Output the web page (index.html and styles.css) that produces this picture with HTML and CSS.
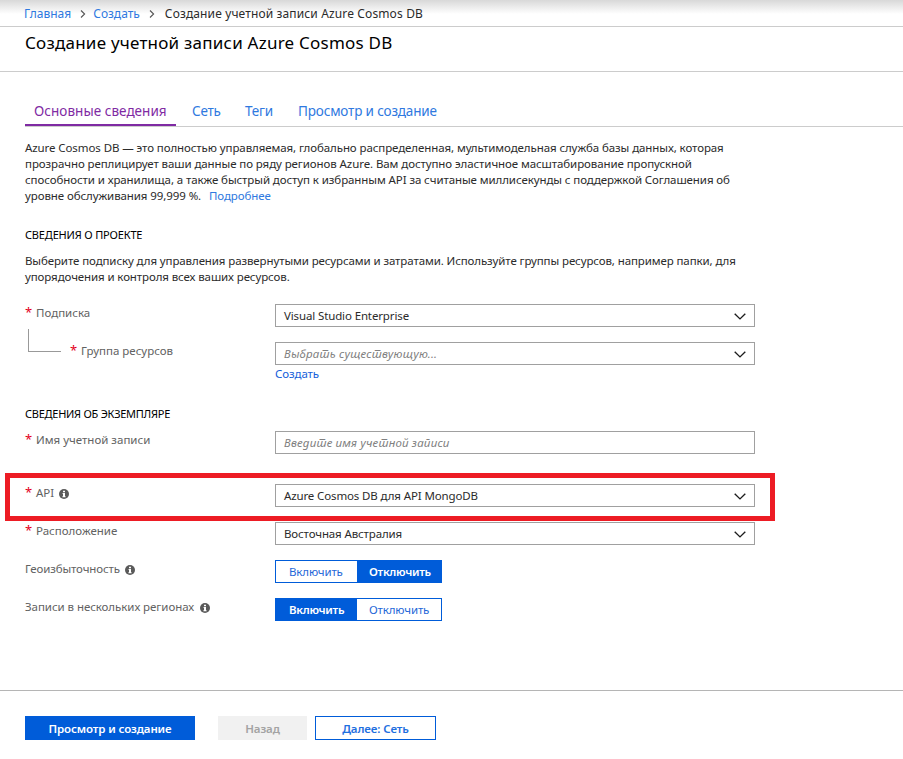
FILE: index.html
```
<!DOCTYPE html>
<html lang="ru">
<head>
<meta charset="utf-8">
<title>Создание учетной записи Azure Cosmos DB</title>
<link rel="stylesheet" href="styles.css">
</head>
<body>
<svg class="defs" aria-hidden="true">
  <symbol id="info" viewBox="0 0 10 10"><circle cx="5" cy="5" r="5" fill="#5a5a5a"/><path d="M4 1.7h2v1.5H4zM3.6 4.1H6v3.2h.6v1H3.4v-1H4V5.1h-.4z" fill="#fff"/></symbol>
  <symbol id="down" viewBox="0 0 12 7"><path d="M.7.8 6 5.9 11.3.8" fill="none" stroke="#1c1c1c" stroke-width="1.4"/></symbol>
  <symbol id="next" viewBox="0 0 6 8"><path d="M1 .5 4.6 4 1 7.5" fill="none" stroke="#555" stroke-width="1.1"/></symbol>
</svg>
<nav class="crumbs">
  <a href="#">Главная</a><svg class="sep"><use href="#next"/></svg><a href="#">Создать</a><svg class="sep"><use href="#next"/></svg><span class="current">Создание учетной записи Azure Cosmos DB</span>
</nav>
<header class="title"><h1>Создание учетной записи Azure Cosmos DB</h1></header>
<div class="tabs">
  <a class="tab active" href="#">Основные сведения</a>
  <a class="tab net" href="#">Сеть</a>
  <a class="tab tags" href="#">Теги</a>
  <a class="tab review" href="#">Просмотр и создание</a>
</div>
<main>
  <p class="intro">Azure Cosmos DB — это полностью управляемая, глобально распределенная, мультимодельная служба базы данных, которая<br>прозрачно реплицирует ваши данные по ряду регионов Azure. Вам доступно эластичное масштабирование пропускной<br>способности и хранилища, а также быстрый доступ к избранным API за считаные миллисекунды с поддержкой Соглашения об<br>уровне обслуживания 99,999 %. <a class="more" href="#">Подробнее</a></p>
  <h2>СВЕДЕНИЯ О ПРОЕКТЕ</h2>
  <p class="hint">Выберите подписку для управления развернутыми ресурсами и затратами. Используйте группы ресурсов, например папки, для<br>упорядочения и контроля всех ваших ресурсов.</p>
  <div class="row subscription">
    <label><i class="req">*</i>Подписка</label>
    <div class="box"><span>Visual Studio Enterprise</span><svg class="chev"><use href="#down"/></svg></div>
  </div>
  <div class="row group">
    <div class="nested"><span class="branch"></span><label><i class="req">*</i>Группа ресурсов</label></div>
    <div>
      <div class="box"><span class="placeholder" lang="sr">Выбрать существующую...</span><svg class="chev"><use href="#down"/></svg></div>
      <a class="create" href="#">Создать</a>
    </div>
  </div>
  <h2 class="instance">СВЕДЕНИЯ ОБ ЭКЗЕМПЛЯРЕ</h2>
  <div class="row name">
    <label><i class="req">*</i>Имя учетной записи</label>
    <div class="box"><span class="placeholder" lang="sr">Введите имя учетной записи</span></div>
  </div>
  <div class="row api">
    <label><i class="req">*</i>API<svg class="info"><use href="#info"/></svg></label>
    <div class="box"><span>Azure Cosmos DB для API MongoDB</span><svg class="chev"><use href="#down"/></svg></div>
  </div>
  <div class="row">
    <label><i class="req">*</i>Расположение</label>
    <div class="box"><span>Восточная Австралия</span><svg class="chev"><use href="#down"/></svg></div>
  </div>
  <div class="row">
    <label class="geo">Геоизбыточность<svg class="info"><use href="#info"/></svg></label>
    <div class="toggle"><span>Включить</span><span class="on">Отключить</span></div>
  </div>
  <div class="row">
    <label class="wide">Записи в нескольких регионах<svg class="info"><use href="#info"/></svg></label>
    <div class="toggle"><span class="on">Включить</span><span>Отключить</span></div>
  </div>
</main>
<footer>
  <div class="btn primary">Просмотр и создание</div>
  <div class="btn disabled">Назад</div>
  <div class="btn outline">Далее: Сеть</div>
</footer>
</body>
</html>
```
FILE: styles.css
```
*, *::after { box-sizing: border-box; }
body {
  margin: 0;
  height: 759px;
  display: flex;
  flex-direction: column;
  background: #fff;
  color: #2b2b2b;
  font: 11.5px/16px "Noto Sans", sans-serif;
  overflow: hidden;
}
a { color: #2f79e0; text-decoration: none; }
h1, h2, p { margin: 0; font-weight: 400; }
.defs { position: absolute; width: 0; height: 0; }

.crumbs {
  height: 27px;
  flex: none;
  display: flex;
  align-items: center;
  padding: 1px 0 0 24px;
  border-bottom: 1px solid #ccc;
  background: linear-gradient(#d8d8d8, #fff 14px);
  font-size: 12px;
}
.sep { width: 6px; height: 8px; margin: 0 7px 0 9px; }
.current { margin-left: 3px; letter-spacing: .13px; }
.title { height: 45px; flex: none; padding-left: 25px; border-bottom: 1px solid #ccc; }
h1 { font-size: 17px; line-height: 32px; letter-spacing: .23px; color: #000; }

.tabs {
  height: 55px;
  flex: none;
  display: flex;
  align-items: flex-end;
  margin-left: 25px;
  border-bottom: 1px solid #ccc;
  font-size: 13.5px;
}
.tab { height: 31px; line-height: 33px; white-space: nowrap; }
.active { width: 151px; padding-left: 9px; color: #7f2aa3; border-bottom: 2px solid #7f2aa3; letter-spacing: .04px; }
.net { width: 53px; margin-left: 16px; letter-spacing: -.2px; }
.tags { width: 53px; letter-spacing: -.2px; }
.review { letter-spacing: -.16px; }

main { flex: 1; padding: 13px 0 0 25px; }
.intro { letter-spacing: -.09px; white-space: nowrap; }
.hint { letter-spacing: -.105px; white-space: nowrap; }
.more { margin-left: 5px; }
h2 { margin-top: 23px; font-size: 11px; line-height: 16px; letter-spacing: -.17px; color: #000; }
.hint { margin-top: 10px; }

.row {
  display: grid;
  grid-template-columns: 250px 480px;
  align-items: start;
  margin-bottom: 15px;
  position: relative;
}
.subscription { margin-top: 19px; }
label { display: flex; line-height: 18px; color: #626262; white-space: nowrap; }
.wide { letter-spacing: -.06px; }
.wide .info { margin-left: 6px; }
.geo { letter-spacing: -.13px; }
.req { width: 11px; color: #e3001b; font-style: normal; font-size: 13px; line-height: 16px; }
.nested { display: flex; }
.branch {
  width: 33px;
  height: 23px;
  margin: -13px 9px 0 3px;
  border-left: 1px solid #999;
  border-bottom: 1px solid #999;
}
.info { width: 10px; height: 10px; margin: 5px 0 0 5px; }
.box {
  height: 23px;
  display: flex;
  align-items: center;
  justify-content: space-between;
  padding: 0 8px;
  border: 1px solid #a0a0a0;
  letter-spacing: -.13px;
}
.chev { width: 12px; height: 7px; margin-top: 2px; }
.placeholder { font-style: italic; color: #808080; letter-spacing: .17px; }
.create { display: block; margin-top: 1px; color: #1460da; letter-spacing: -.1px; }
.group { margin-bottom: 0; }
h2.instance { margin: 24px 0 9px; letter-spacing: -.26px; }
.name { margin-bottom: 30px; }
.api::after {
  content: "";
  position: absolute;
  left: -20px;
  top: -11px;
  width: 770px;
  height: 48px;
  border: 5px solid #ed1c24;
}
.toggle { display: flex; width: 167px; height: 23px; border: 1px solid #005cd9; color: #1f68d8; }
.toggle span { width: 81px; padding-left: 13px; line-height: 22px; letter-spacing: -.15px; }
.toggle span + span { flex: 1; padding-left: 12px; }
.toggle .on { background: #005cd9; color: #fff; font-weight: 600; letter-spacing: -.3px; }

footer {
  height: 69px;
  flex: none;
  display: flex;
  padding: 25px 0 0 25px;
  border-top: 1px solid #b5b5b5;
}
.btn { height: 24px; line-height: 26px; text-align: center; font-weight: 600; letter-spacing: -.12px; }
.primary { width: 170px; background: #005cd9; color: #fff; }
.disabled { width: 89px; margin: 0 8px 0 23px; background: #f1f1f1; color: #a3a3a3; }
.outline { width: 121px; line-height: 24px; border: 1px solid #005cd9; color: #1f6fe0; }
```
